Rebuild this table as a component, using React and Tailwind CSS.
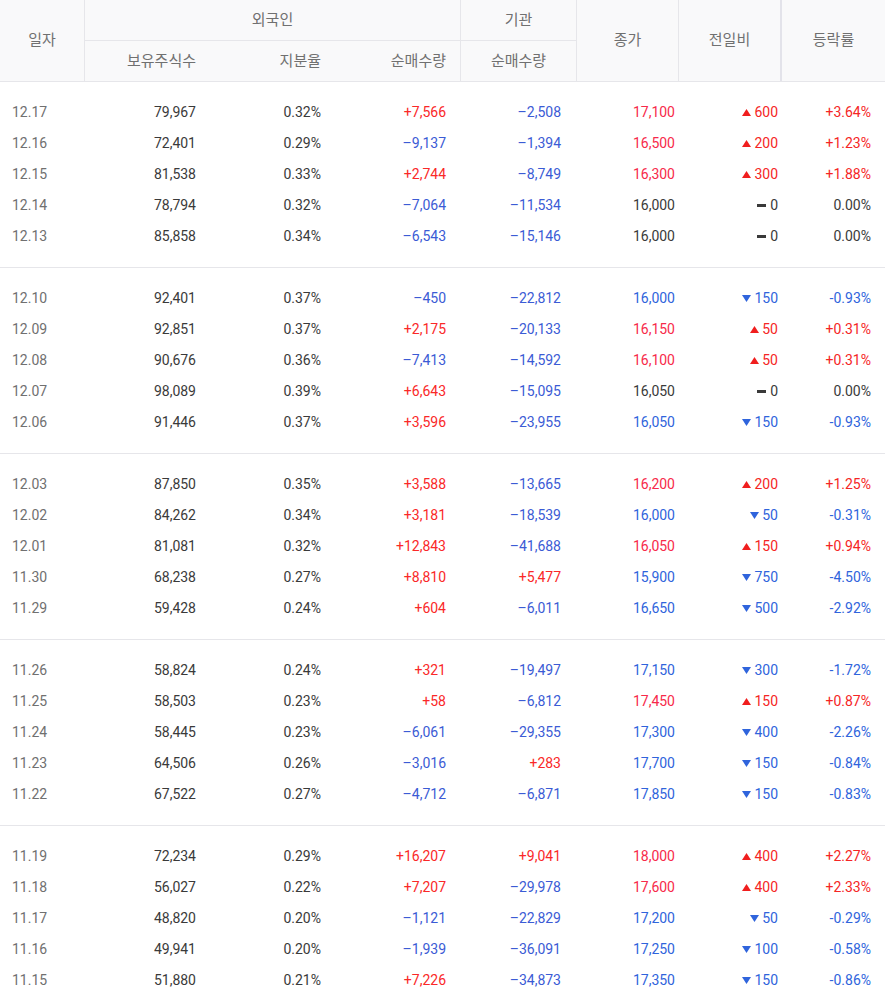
import React from "react";

const COLS = "grid grid-cols-[85px_125px_125px_126px_116px_102px_103px_103px]";

const groups = [
  [
    ["12.17", "79,967", "0.32%", "+7,566", "–2,508", "17,100", "u", "600", "+3.64%"],
    ["12.16", "72,401", "0.29%", "–9,137", "–1,394", "16,500", "u", "200", "+1.23%"],
    ["12.15", "81,538", "0.33%", "+2,744", "–8,749", "16,300", "u", "300", "+1.88%"],
    ["12.14", "78,794", "0.32%", "–7,064", "–11,534", "16,000", "f", "0", "0.00%"],
    ["12.13", "85,858", "0.34%", "–6,543", "–15,146", "16,000", "f", "0", "0.00%"],
  ],
  [
    ["12.10", "92,401", "0.37%", "–450", "–22,812", "16,000", "d", "150", "-0.93%"],
    ["12.09", "92,851", "0.37%", "+2,175", "–20,133", "16,150", "u", "50", "+0.31%"],
    ["12.08", "90,676", "0.36%", "–7,413", "–14,592", "16,100", "u", "50", "+0.31%"],
    ["12.07", "98,089", "0.39%", "+6,643", "–15,095", "16,050", "f", "0", "0.00%"],
    ["12.06", "91,446", "0.37%", "+3,596", "–23,955", "16,050", "d", "150", "-0.93%"],
  ],
  [
    ["12.03", "87,850", "0.35%", "+3,588", "–13,665", "16,200", "u", "200", "+1.25%"],
    ["12.02", "84,262", "0.34%", "+3,181", "–18,539", "16,000", "d", "50", "-0.31%"],
    ["12.01", "81,081", "0.32%", "+12,843", "–41,688", "16,050", "u", "150", "+0.94%"],
    ["11.30", "68,238", "0.27%", "+8,810", "+5,477", "15,900", "d", "750", "-4.50%"],
    ["11.29", "59,428", "0.24%", "+604", "–6,011", "16,650", "d", "500", "-2.92%"],
  ],
  [
    ["11.26", "58,824", "0.24%", "+321", "–19,497", "17,150", "d", "300", "-1.72%"],
    ["11.25", "58,503", "0.23%", "+58", "–6,812", "17,450", "u", "150", "+0.87%"],
    ["11.24", "58,445", "0.23%", "–6,061", "–29,355", "17,300", "d", "400", "-2.26%"],
    ["11.23", "64,506", "0.26%", "–3,016", "+283", "17,700", "d", "150", "-0.84%"],
    ["11.22", "67,522", "0.27%", "–4,712", "–6,871", "17,850", "d", "150", "-0.83%"],
  ],
  [
    ["11.19", "72,234", "0.29%", "+16,207", "+9,041", "18,000", "u", "400", "+2.27%"],
    ["11.18", "56,027", "0.22%", "+7,207", "–29,978", "17,600", "u", "400", "+2.33%"],
    ["11.17", "48,820", "0.20%", "–1,121", "–22,829", "17,200", "d", "50", "-0.29%"],
    ["11.16", "49,941", "0.20%", "–1,939", "–36,091", "17,250", "d", "100", "-0.58%"],
    ["11.15", "51,880", "0.21%", "+7,226", "–34,873", "17,350", "d", "150", "-0.86%"],
  ],
];

const netColor = (v) => (v.startsWith("+") ? "text-[#fa2828]" : "text-[#3b5bd5]");
const dirColor = (d) =>
  d === "u" ? "text-[#f7294a]" : d === "d" ? "text-[#2f64dc]" : "text-[#3a3a3a]";
const chgColor = (d) =>
  d === "u" ? "text-[#f52525]" : d === "d" ? "text-[#2f64dc]" : "text-[#3a3a3a]";

function Mark({ d }) {
  if (d === "u")
    return (
      <svg width="9" height="7" viewBox="0 0 9 7" className="mr-[3px]">
        <polygon points="4.5,0 9,7 0,7" fill="#f01e1e" />
      </svg>
    );
  if (d === "d")
    return (
      <svg width="9" height="7" viewBox="0 0 9 7" className="mr-[3px]">
        <polygon points="0,0 9,0 4.5,7" fill="#2f64dc" />
      </svg>
    );
  return <span className="mr-[4px] inline-block h-[3px] w-[9px] bg-[#3a3a3a]" />;
}

function Row({ r }) {
  const [date, hold, ratio, fnet, inet, close, d, chg, rate] = r;
  return (
    <div className={`${COLS} h-[31px] items-center text-[14px]`}>
      <div className="pl-[12px] text-[#707070]">{date}</div>
      <div className="pr-[14px] text-right text-[#3a3a3a]">{hold}</div>
      <div className="pr-[14px] text-right text-[#3a3a3a]">{ratio}</div>
      <div className={`pr-[15px] text-right ${netColor(fnet)}`}>{fnet}</div>
      <div className={`pr-[16px] text-right ${netColor(inet)}`}>{inet}</div>
      <div className={`pr-[4px] text-right ${dirColor(d)}`}>{close}</div>
      <div className={`flex items-center justify-end pr-[4px] ${chgColor(d)}`}>
        <Mark d={d} />
        {chg}
      </div>
      <div className={`pr-[14px] text-right ${chgColor(d)}`}>{rate}</div>
    </div>
  );
}

export default function App() {
  return (
    <div
      className="w-[885px] bg-white"
      style={{ fontFamily: 'Roboto, "Noto Sans CJK KR", sans-serif' }}
    >
      <div
        className={`${COLS} grid-rows-[41px_40px] border-b border-[#e6e6ea] bg-[#f9f9fa] text-[15px] text-[#707070]`}
      >
        <div className="row-span-2 flex items-center justify-center border-r border-[#e6e6ea]">일자</div>
        <div className="col-span-3 flex items-center justify-center border-b border-r border-[#e6e6ea]">외국인</div>
        <div className="flex items-center justify-center border-b border-r border-[#e6e6ea]">기관</div>
        <div className="row-span-2 flex items-center justify-center border-r border-[#e6e6ea]">종가</div>
        <div className="row-span-2 flex items-center justify-center border-r-2 border-[#e3e3ea]">전일비</div>
        <div className="row-span-2 flex items-center justify-center">등락률</div>
        <div className="flex items-center justify-end pr-[14px]">보유주식수</div>
        <div className="flex items-center justify-end pr-[14px]">지분율</div>
        <div className="flex items-center justify-end border-r border-[#e6e6ea] pr-[14px]">순매수량</div>
        <div className="flex items-center justify-center border-r border-[#e6e6ea]">순매수량</div>
      </div>
      {groups.map((g, i) => (
        <div key={i} className={`py-[15px] ${i > 0 ? "border-t border-[#e6e6ea]" : ""}`}>
          {g.map((r) => (
            <Row key={r[0]} r={r} />
          ))}
        </div>
      ))}
    </div>
  );
}
